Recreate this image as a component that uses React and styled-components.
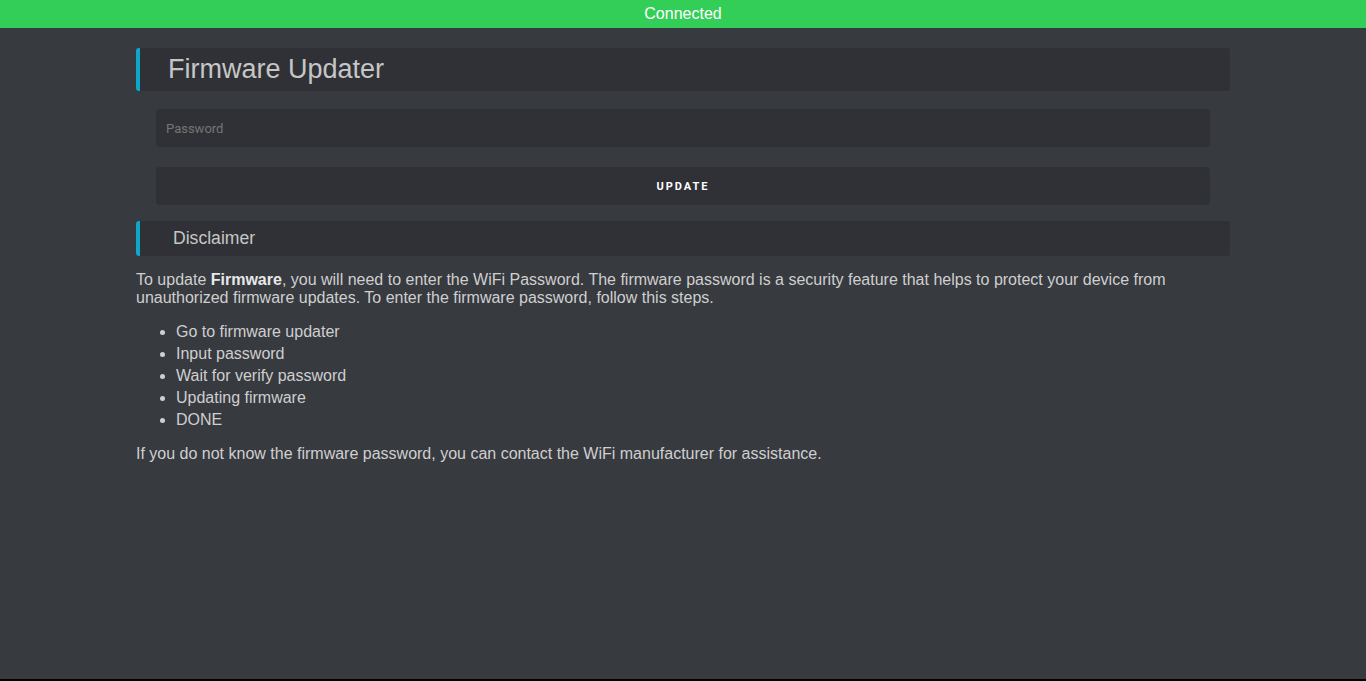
import React from 'react';
import styled, { createGlobalStyle } from 'styled-components';

const GlobalStyle = createGlobalStyle`
  html {
    background: #000;
  }
  body {
    margin: 0;
    height: 679px;
    background: #373a3f;
    font-family: "Liberation Sans", Arial, sans-serif;
    color: #cfcfcf;
  }
`;

const StatusBar = styled.div`
  height: 28px;
  background: #33ce57;
  color: #fff;
  font-size: 16px;
  display: flex;
  align-items: center;
  justify-content: center;
`;

const Container = styled.main`
  margin: 20px 136px 0;
`;

const SectionHead = styled.div`
  display: flex;
  align-items: center;
  height: ${(p) => p.height};
  padding-left: ${(p) => p.indent};
  background: #303136;
  border-left: 4px solid #0fa6cc;
  border-radius: 3px;
  color: #c6c6c6;
  font-size: ${(p) => p.size};
`;

const Form = styled.div`
  display: flex;
  flex-direction: column;
  gap: 20px;
  padding: 18px 20px 16px;
`;

const Input = styled.input`
  height: 38px;
  box-sizing: border-box;
  border: none;
  border-radius: 4px;
  background: #303136;
  padding: 0 10px;
  color: #ddd;
  font: 13px Roboto, "Liberation Sans", sans-serif;
  outline: none;

  &::placeholder {
    color: #757575;
  }
`;

const UpdateBtn = styled.button`
  height: 38px;
  border: none;
  border-radius: 4px;
  background: #303136;
  color: #fff;
  font: 700 11px Roboto, "Liberation Sans", sans-serif;
  letter-spacing: 2px;
  text-transform: uppercase;
  cursor: pointer;
`;

const Text = styled.p`
  margin: ${(p) => p.margin || '0'};
  font-size: 16px;
  line-height: 18px;

  b {
    color: #e8e8e8;
  }
`;

const Steps = styled.ul`
  margin: 14px 0;
  padding-left: 40px;
  font-size: 16px;
  line-height: 22px;
`;

const steps = [
  'Go to firmware updater',
  'Input password',
  'Wait for verify password',
  'Updating firmware',
  'DONE',
];

export default function App() {
  return (
    <>
      <GlobalStyle />
      <StatusBar>Connected</StatusBar>
      <Container>
        <SectionHead height="43px" indent="28px" size="27px">Firmware Updater</SectionHead>
        <Form>
          <Input type="password" placeholder="Password" />
          <UpdateBtn>Update</UpdateBtn>
        </Form>
        <SectionHead height="35px" indent="33px" size="17.6px">Disclaimer</SectionHead>
        <Text margin="15px 0 0">
          To update <b>Firmware</b>, you will need to enter the WiFi Password. The firmware password is a security
          feature that helps to protect your device from unauthorized firmware updates. To enter the firmware
          password, follow this steps.
        </Text>
        <Steps>
          {steps.map((s) => (
            <li key={s}>{s}</li>
          ))}
        </Steps>
        <Text>If you do not know the firmware password, you can contact the WiFi manufacturer for assistance.</Text>
      </Container>
    </>
  );
}
